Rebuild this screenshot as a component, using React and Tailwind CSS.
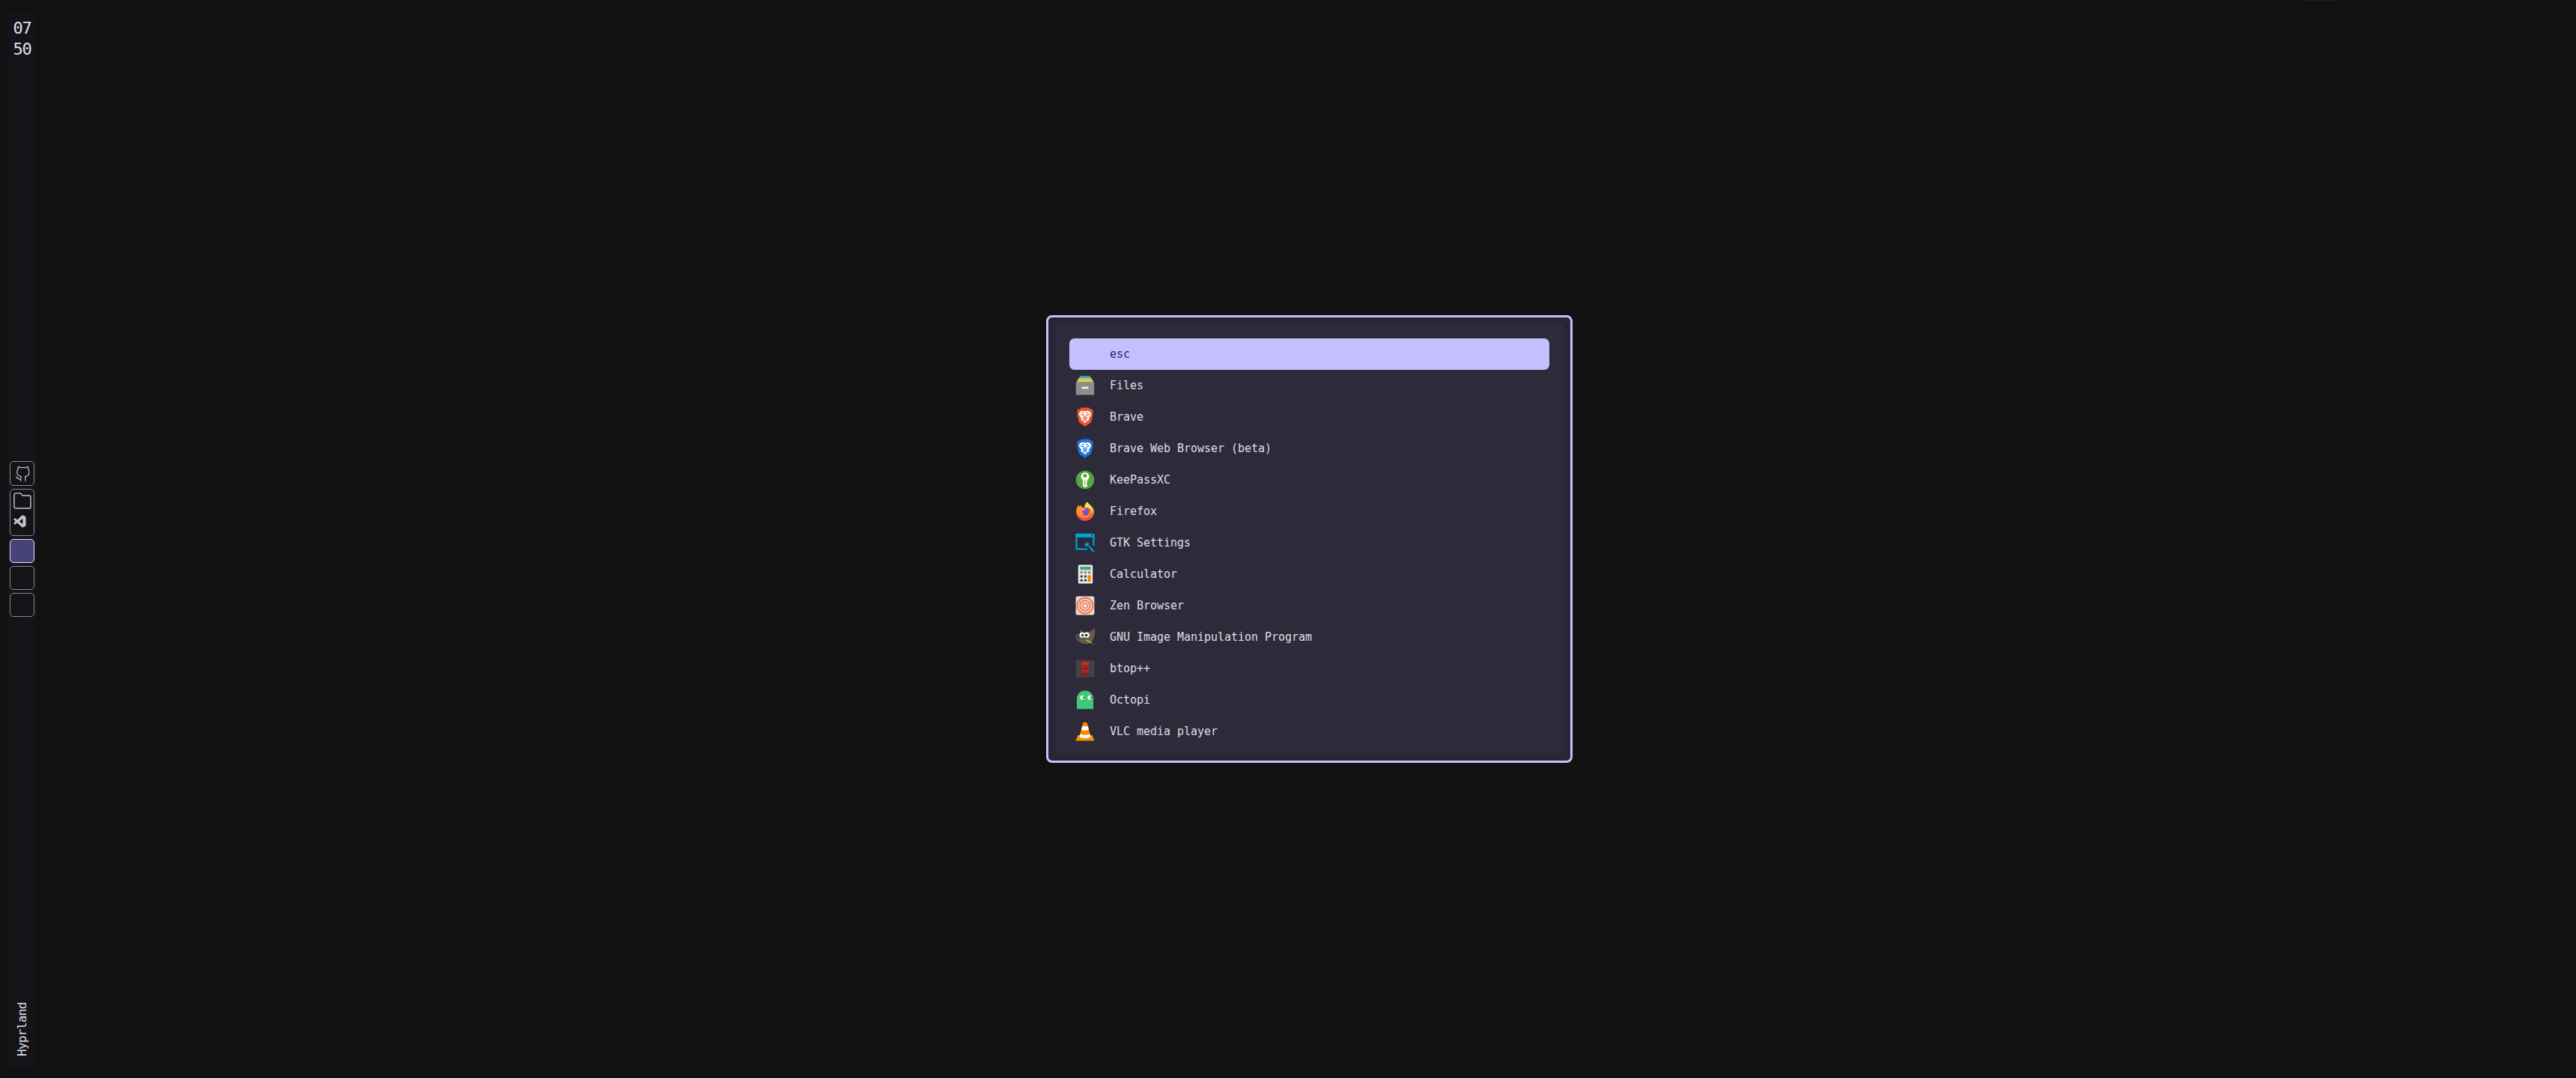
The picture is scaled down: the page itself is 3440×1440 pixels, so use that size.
import React from "react";
import { SiBrave } from "react-icons/si";
import { VscGithubAlt, VscVscode } from "react-icons/vsc";

const svg = { width: 26, height: 26, viewBox: "0 0 26 26" };

const FilesIcon = () => (
  <svg {...svg}>
    <rect x="6" y="0" width="14" height="4" rx="1" fill="#4a86cf" />
    <rect x="4" y="2.6" width="18" height="4" rx="1" fill="#8ddb5b" />
    <rect x="2.5" y="5.2" width="21" height="5" rx="1" fill="#fdc94c" />
    <rect x="0.8" y="8" width="24.4" height="17.6" rx="1" fill="#8e8e8e" />
    <rect x="8.5" y="14.8" width="9" height="2.4" rx="1" fill="#f5f5f5" />
  </svg>
);

const BraveIcon = ({ color }) => (
  <svg {...svg}>
    <path d="M8 .6h10l2.3 2.2 2.2-.3 1.3 3-.7 2 .6 1.8-2.2 9.2c-.4 1.6-1.4 2.6-2.6 3.5L13 25.6l-5.9-3.6c-1.2-.9-2.2-1.9-2.6-3.5L2.3 9.3l.6-1.8-.7-2 1.3-3 2.2.3z" fill={color} />
    <path d="M9.5 4.8 13 5.4l3.5-.6 2.3.4 2.5 3.3-.6 2.3-2.6 4 .5 2-2.8 2L13 21l-2.800-2.200-2.800-2 .5-2-2.600-4-.6-2.300 2.500-3.300z" fill="#fff" />
    <path d="M7 9.600l3.600.6.9 1.600-.6 3M19 9.600l-3.600.6-.9 1.600.6 3M10.300 15.700 13 14.500l2.700 1.200M13 12.500v3M10.500 18.200l2.500-1.500 2.500 1.500M9 7.300l2.500.6M17 7.300l-2.500.6" fill="none" stroke={color} strokeWidth="1.100" />
  </svg>
);

const KeePassIcon = () => (
  <svg {...svg}>
    <circle cx="13" cy="13" r="12.200" fill="#5aa53c" />
    <path fillRule="evenodd" fill="#fff" d="M13 3.200a5.400 5.400 0 0 1 3 9.900v2.200l-1 1 1 1.200-1 1.200 1 1.200v1.300L13 23.200l-3-2v-8.100A5.400 5.400 0 0 1 13 3.200zm0 1.900a2.500 2.500 0 1 0 0 5 2.500 2.500 0 0 0 0-5zM12.300 13v7.500h1.100V13z" />
  </svg>
);

const FirefoxIcon = () => (
  <svg {...svg}>
    <defs>
      <linearGradient id="foxBody" x1="0.850" y1="0.100" x2="0.200" y2="0.950">
        <stop offset="0" stopColor="#ffe03a" />
        <stop offset="0.400" stopColor="#ff9020" />
        <stop offset="0.750" stopColor="#ff5a3a" />
        <stop offset="1" stopColor="#f0307a" />
      </linearGradient>
    </defs>
    <path d="M16 .4c1 2 3 3.200 5 5.600 2.800 2.500 4 5.200 4 8A12 11.600 0 0 1 1 14c0-3.300.9-6 2.200-7.600L3.800 4.600 5.500 7 7 4.600 9.400 8l3.200.4c-.5-3.600 1-6.400 3.400-8z" fill="url(#foxBody)" />
    <path d="M2.500 18.500c5 5 14 4.500 22-5-.2 7-5 12.100-11.500 12.100-5 0-8.800-2.600-10.500-7.100z" fill="#f8454e" opacity=".75" />
    <path d="M1.200 12C2 20 9 22.600 14 21.700c5.500-1 8.600-5 7.500-10.200L17 7 9 8 3.700 5z" fill="#ff8a1c" />
    <circle cx="13.500" cy="13.300" r="5.700" fill="#7a52c7" />
    <path d="M2.500 8.500 9.300 8l4.500 1.800c-.8 1.500-2.200 2.200-4.500 2.500-.6 2 .6 3.800 3 4.300-4 1.600-8-1.100-9.800-8.100z" fill="#ff9a2a" />
    <path d="M16 .4c1 2 3 3.200 5 5.600 2 2.200 2.400 4.500 1.900 7.500-1.200-3.500-3.600-4.300-6-5.500l-4.300.4c-.5-3.600 1-6.400 3.400-8z" fill="#ffde3c" />
  </svg>
);

const GtkIcon = () => (
  <svg {...svg}>
    <path d="M16 21.500H3a1.600 1.600 0 0 1-1.600-1.600V2.400H24.500V17" fill="none" stroke="#00a9d6" strokeWidth="2" />
    <path d="M2.500.7h21a2 2 0 0 1 2 2v3H.5v-3a2 2 0 0 1 2-2z" fill="#00a9d6" />
    <rect x="21.300" y="2.200" width="2" height="2" fill="#2d2b3a" />
    <path d="M15.300 11.200l1 2.600 2.800-.2-1.700 2 1.300 2.500-2.700-.9-2 1.900v-2.800l-2.500-1.300 2.800-.8z" fill="#00a9d6" />
    <path d="M18.500 18l6.200 7" stroke="#00a9d6" strokeWidth="2" />
  </svg>
);

const CalculatorIcon = () => (
  <svg {...svg}>
    <rect x="3.800" y=".6" width="19.400" height="24.800" rx="1.500" fill="#e9e9e9" />
    <rect x="6.500" y="3" width="14" height="4.200" rx=".5" fill="#43a878" />
    {[[8.300, 10.600], [13.400, 10.600], [18.700, 10.600]].map(([x, y]) => (
      <circle key={x} cx={x} cy={y} r="1.800" fill="#8a8a8a" />
    ))}
    {[[8.300, 16], [13.400, 16], [8.300, 21.200], [13.400, 21.200]].map(([x, y]) => (
      <circle key={x + "-" + y} cx={x} cy={y} r="1.800" fill="#454545" />
    ))}
    <rect x="16.600" y="14.200" width="4" height="9" rx="1" fill="#ff7f0e" />
  </svg>
);

const ZenIcon = () => (
  <svg {...svg}>
    <rect x=".6" y=".6" width="24.800" height="24.800" rx="2.500" fill="#e3dfd0" />
    <g fill="none" stroke="#f97257">
      <circle cx="13" cy="13" r="10.500" strokeWidth="2" />
      <circle cx="13" cy="13" r="6.800" strokeWidth="1.700" />
      <circle cx="13" cy="13" r="3.500" strokeWidth="1.400" />
    </g>
  </svg>
);

const GimpIcon = () => (
  <svg {...svg}>
    <path d="M25.500.4c1.300 8.500.2 15.500-4.500 19.500-4.500 3.600-11.500 3-16-1.200L.6 15.400 6 9.500 6.800 3l4.700 4.200C17 7.400 22 5 25.500.4z" fill="#685d49" />
    <path d="M5.300 9C2 8.300 0 9.300 0 11c0 3 2.500 5.800 6 5.700z" fill="#454850" />
    <circle cx="9" cy="10.300" r="3.500" fill="#fff" />
    <circle cx="15" cy="10.300" r="3.800" fill="#fff" />
    <circle cx="9.600" cy="10.600" r="1.700" fill="#222" />
    <circle cx="14.600" cy="10.600" r="1.800" fill="#222" />
    <path d="M14.500 16.800l5.500 3" stroke="#f0a02e" strokeWidth="1.800" />
    <path d="M20 19.800l2 1.200" stroke="#b8bcc2" strokeWidth="1.800" />
    <path d="M21.500 20.500l5 3" stroke="#3c3e46" strokeWidth="2.200" />
  </svg>
);

const BtopIcon = () => (
  <svg {...svg}>
    <rect x=".8" y="2" width="25" height="22.600" fill="#434343" />
    <rect x="8.200" y="4.500" width="9.600" height="3.500" fill="#ec2024" />
    <path fillRule="evenodd" d="M8.200 8.500h9.600v3.500h-9.600zm3.600 0v2.500h3.500V8.500z" fill="#c92024" />
    <rect x="9.800" y="12" width="7" height="2" fill="#7e1b1e" />
    <path fillRule="evenodd" d="M8.200 14h9.600v4.300h-9.600zm3.300 1.600v1h3.300v-1z" fill="#c32023" />
    <rect x="8.200" y="18.800" width="9.600" height="3.700" fill="#8d1518" />
  </svg>
);

const OctopiIcon = () => (
  <svg {...svg}>
    <path d="M2 25.800V11.500a11 11 0 0 1 22 0v14.300l-2-1.300-2 1.300-2.200-1.300-2.300 1.300-2.300-1.300-2.400 1.300-2.300-1.300-2.300 1.300-2-1.300z" fill="#40c977" />
    <circle cx="9.200" cy="9.800" r="2.800" fill="#fff" />
    <circle cx="19.200" cy="9.800" r="2.800" fill="#fff" />
    <circle cx="11" cy="9.700" r="1.200" fill="#4b4f52" />
    <circle cx="21" cy="9.700" r="1.200" fill="#4b4f52" />
  </svg>
);

const VlcIcon = () => (
  <svg {...svg}>
    <path d="M3.500 18h19l2.800 6.500a.8.8 0 0 1-.8 1H1.500a.8.8 0 0 1-.8-1z" fill="#ff8a00" />
    <path d="M11.500.8h3l1.500 1.700 4.400 17c-2 2.400-12.800 2.400-14.800 0L10 2.500z" fill="#ff8a00" />
    <path d="M9.300 5.800c2 1 5.400 1 7.400 0l1.300 5c-2.500 1.300-7.500 1.300-10 0z" fill="#fff" />
    <path d="M6.500 16.500c3 1.800 10 1.800 13 0l1 3.600c-2 2.900-13 2.900-15 0z" fill="#fff" />
  </svg>
);

const apps = [
  { name: "esc", icon: null },
  { name: "Files", icon: <FilesIcon /> },
  { name: "Brave", icon: <BraveIcon color="#f1502f" /> },
  { name: "Brave Web Browser (beta)", icon: <BraveIcon color="#1b75d8" /> },
  { name: "KeePassXC", icon: <KeePassIcon /> },
  { name: "Firefox", icon: <FirefoxIcon /> },
  { name: "GTK Settings", icon: <GtkIcon /> },
  { name: "Calculator", icon: <CalculatorIcon /> },
  { name: "Zen Browser", icon: <ZenIcon /> },
  { name: "GNU Image Manipulation Program", icon: <GimpIcon /> },
  { name: "btop++", icon: <BtopIcon /> },
  { name: "Octopi", icon: <OctopiIcon /> },
  { name: "VLC media player", icon: <VlcIcon /> },
];

const box = "w-[33px] shrink-0 rounded-[5px] border border-[#8b8991]";

function Sidebar() {
  return (
    <aside className="ml-[10px] mt-[15px] flex h-[1410px] w-[39px] shrink-0 flex-col items-center rounded-[6px] bg-[#141318] text-[#e5e1e9]">
      <div className="mt-[9px] h-[592px] w-[26px] text-center text-[22px] leading-[28px] tracking-[-1.2px]">
        <div>07</div>
        <div>50</div>
      </div>
      <div className="flex flex-col gap-1 text-[#c9c5d0]">
        <div className={box + " flex h-[33px] items-center justify-center"}>
          <VscGithubAlt size={22} />
        </div>
        <div className={box + " flex h-[63px] flex-col items-center pt-[4px]"}>
          <svg width="24" height="22" viewBox="0 0 24 22" fill="none" stroke="currentColor" strokeWidth="1.400">
            <path d="M3.200.9h5.300c.9 0 1.500.4 2 1.100l.9 1.300c.4.500.8.700 1.500.7h8c1.300 0 2.100.9 2.100 2.100v12.800c0 1.300-.8 2.100-2.100 2.100H3.100C1.800 21 .9 20.200.9 18.900V3.200C.9 1.800 1.800.9 3.200.9z" />
          </svg>
          <div className="mr-[5px] mt-[7px]">
            <VscVscode size={20} />
          </div>
        </div>
        <div className="h-[32px] w-[33px] rounded-[5px] border border-[#e5deff] bg-[#474377]" />
        <div className={box + " h-[32px]"} />
        <div className={box + " h-[32px]"} />
      </div>
      <div className="mb-[14px] mt-auto rotate-180 text-[16px] leading-[20px] tracking-[-0.63px] [writing-mode:vertical-rl]">
        Hyprland
      </div>
    </aside>
  );
}

function Launcher() {
  return (
    <main className="ml-[1348px] mt-[421px] h-[598px] w-[703px] shrink-0 rounded-[8px] border-[3px] border-[#c6bfff] bg-[#272632] p-[9px]">
      <ul className="h-[574px] rounded-[4px] bg-[#2d2b3a] px-[19px] pt-[19px]">
        {apps.map((app, i) => (
          <li
            key={app.name}
            className={
              "flex h-[42px] items-center gap-[20px] rounded-[7px] pl-2 text-[15px] tracking-[-0.030px] " +
              (i === 0 ? "bg-[#c6bfff] text-[#2e295e]" : "text-[#e0dce6]")
            }
          >
            <span className="flex size-[26px] items-center justify-center">{app.icon}</span>
            <span className="leading-5">{app.name}</span>
          </li>
        ))}
      </ul>
    </main>
  );
}

export default function App() {
  return (
    <div className="relative flex h-[1440px] w-[3440px] items-start overflow-hidden bg-[#111111] font-['DejaVu_Sans_Mono',monospace]">
      <Sidebar />
      <Launcher />
      <div className="absolute left-[3077px] top-0 h-px w-[46px] bg-[#1e1e2e]" />
    </div>
  );
}
